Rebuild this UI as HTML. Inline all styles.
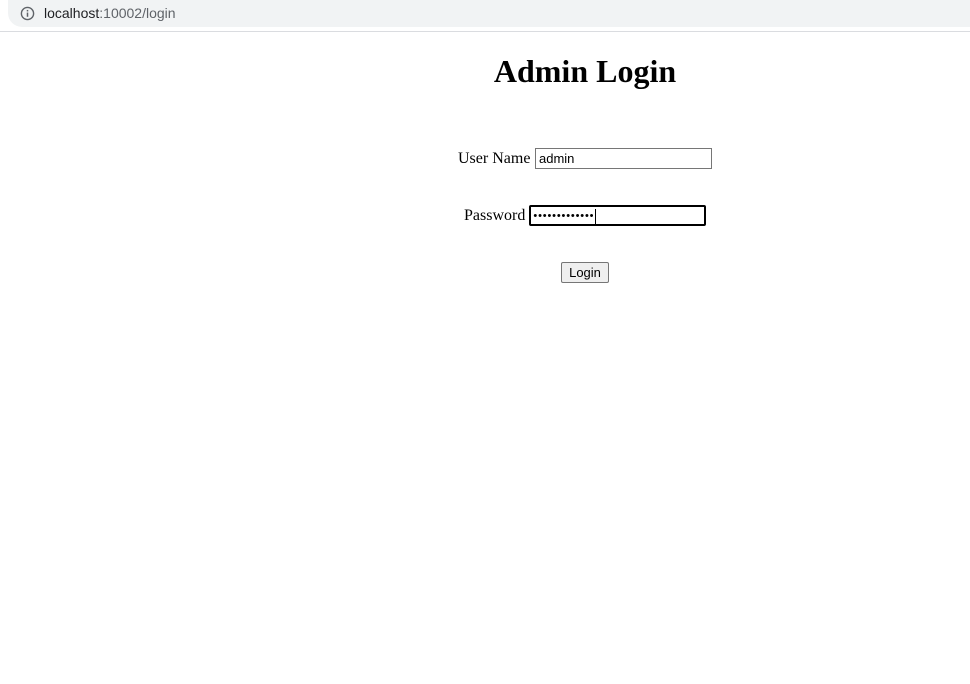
<!DOCTYPE html>
<html><head><style>
body{margin:0;width:970px;height:684px;background:#fff;position:relative;overflow:hidden;font-family:"Liberation Serif",serif;}
.bar{position:absolute;left:0;top:0;width:970px;height:31px;background:#fff;border-bottom:1px solid #dadce0;}
.pill{position:absolute;left:8px;top:0;width:970px;height:27px;background:#f1f3f4;border-radius:0 0 0 14px;}
.url{position:absolute;left:44px;top:5px;font:14px "Liberation Sans",sans-serif;color:#202124;}
.url span{color:#5f6368}
.abs{position:absolute;}
h1{position:absolute;left:0;width:1170px;text-align:center;top:53px;margin:0;font-size:32px;font-weight:bold;}
.lbl{font-size:16px;color:#000;}
.inp{position:absolute;box-sizing:border-box;border:1px solid #767676;background:#fff;font:13px "Liberation Sans",sans-serif;padding:2px 3px;}
.dots span.d{display:inline-block;width:4.7px;text-align:center}
</style></head><body>
<div class="bar"><div class="pill"></div>
<svg class="abs" style="left:20px;top:6px" width="15" height="15" viewBox="0 0 16 16"><circle cx="8" cy="8" r="6.5" fill="none" stroke="#5f6368" stroke-width="1.5"/><rect x="7.2" y="7" width="1.6" height="4.5" fill="#5f6368"/><rect x="7.2" y="4.2" width="1.6" height="1.6" fill="#5f6368"/></svg>
<div class="url">localhost<span>:10002/login</span></div></div>
<h1>Admin Login</h1>
<div class="abs lbl" style="left:458px;top:150px">User Name</div>
<div class="inp" style="left:535px;top:148px;width:177px;height:21px">admin</div>
<div class="abs lbl" style="left:464px;top:207px">Password</div>
<div class="inp dots" style="left:529px;top:205px;width:177px;height:21px;border:2px solid #000;border-radius:2px;font-size:11px;padding:2px 2px;line-height:15px;white-space:nowrap"><span class="d">•</span><span class="d">•</span><span class="d">•</span><span class="d">•</span><span class="d">•</span><span class="d">•</span><span class="d">•</span><span class="d">•</span><span class="d">•</span><span class="d">•</span><span class="d">•</span><span class="d">•</span><span class="d">•</span><span style="display:inline-block;width:1px;height:15px;background:#000;vertical-align:middle;margin-left:1px"></span></div>
<div class="abs" style="left:561px;top:262px;width:48px;height:21px;box-sizing:border-box;border:1px solid #767676;border-radius:2px;background:#efefef;font:13px 'Liberation Sans',sans-serif;text-align:center;line-height:19px">Login</div>
</body></html>
